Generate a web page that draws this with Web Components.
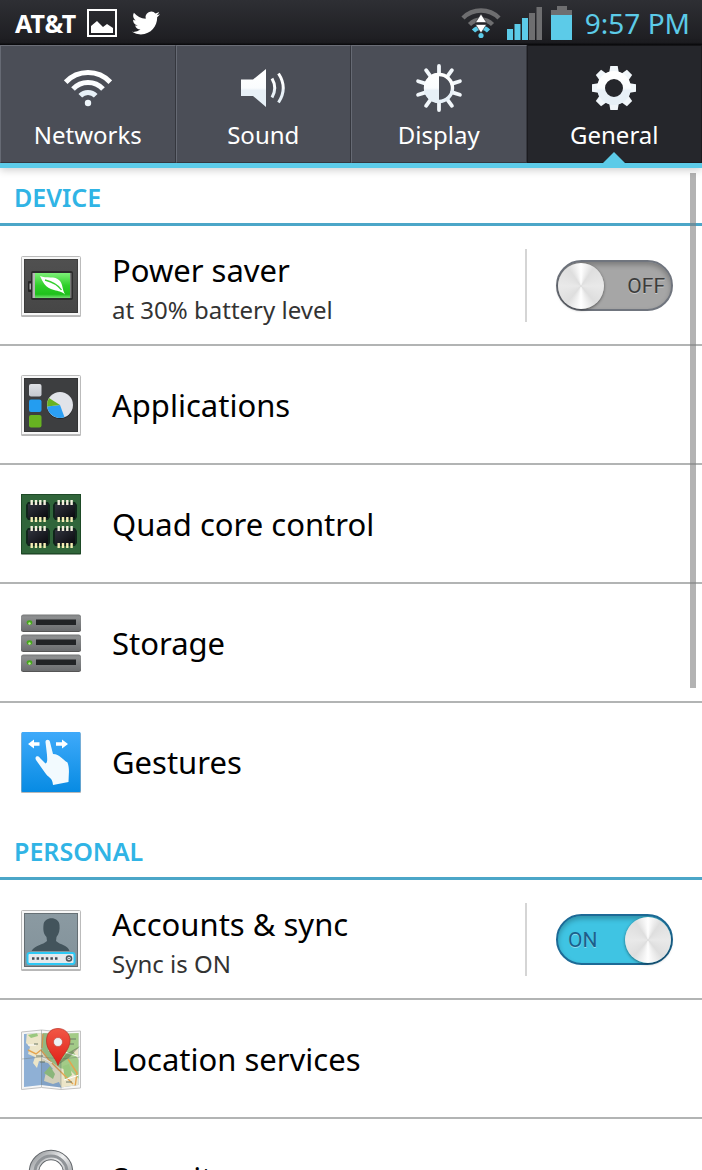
<!DOCTYPE html>
<html lang="en">
<head>
<meta charset="utf-8">
<meta name="viewport" content="width=device-width, initial-scale=1">
<title>Settings</title>
<style>
  html, body {
    margin: 0;
    height: 100%;
    overflow: hidden;
  }

  body {
    display: flex;
    flex-direction: column;
    background: #fff;
    color: #000;
    font-family: 'Noto Sans', 'Open Sans', sans-serif;
    --accent: #5ccbe8;
    --heading: #30b4e5;
  }
</style>
</head>
<body>

<status-bar carrier="AT&amp;T" time="9:57 PM"></status-bar>

<settings-tabs>
  <settings-tab icon="wifi">Networks</settings-tab>
  <settings-tab icon="sound">Sound</settings-tab>
  <settings-tab icon="display">Display</settings-tab>
  <settings-tab icon="gear" selected>General</settings-tab>
</settings-tabs>

<settings-list>
  <settings-section heading="DEVICE">
    <settings-row icon="power" label="Power saver" detail="at 30% battery level">
      <toggle-switch label="Power saver"></toggle-switch>
    </settings-row>
    <settings-row icon="apps" label="Applications"></settings-row>
    <settings-row icon="quad" label="Quad core control"></settings-row>
    <settings-row icon="storage" label="Storage"></settings-row>
    <settings-row icon="gestures" label="Gestures" last></settings-row>
  </settings-section>
  <settings-section heading="PERSONAL">
    <settings-row icon="accounts" label="Accounts &amp; sync" detail="Sync is ON">
      <toggle-switch label="Accounts and sync" on></toggle-switch>
    </settings-row>
    <settings-row icon="location" label="Location services"></settings-row>
    <settings-row icon="security" label="Security"></settings-row>
  </settings-section>
</settings-list>

<script>
// repeats one shape around the centre of an icon
const spin = (shape, count, cx, cy) =>
  Array.from({ length: count }, (_, i) =>
    `<g transform="rotate(${i * 360 / count} ${cx} ${cy})">${shape}</g>`).join('');

const shine = `
  <linearGradient id="shine" x1="0" y1="0" x2="0" y2="48" gradientUnits="userSpaceOnUse">
    <stop offset=".2" stop-color="#fff"/><stop offset=".5" stop-color="#fafcfe"/>
    <stop offset=".55" stop-color="#e8f0f7"/><stop offset="1" stop-color="#e6f0f7"/>
  </linearGradient>`;

// white card with a dark inner plate, shared by several row icons
const plate = (top, bottom) => `
  <linearGradient id="plate" x1="0" y1="0" x2="0" y2="1">
    <stop offset="0" stop-color="${top}"/><stop offset="1" stop-color="${bottom}"/>
  </linearGradient>
  <rect x="2" y="3" width="60" height="60" rx="1.5" fill="#999" opacity=".7"/>
  <rect x="2.5" y="2.5" width="59" height="59" rx="1" fill="#f7f7f7" stroke="#bbb"/>
  <rect x="5" y="5" width="54" height="54" fill="url(#plate)"/>
  <rect x="5.5" y="5.5" width="53" height="53" fill="none" stroke="#222" stroke-opacity=".35"/>`;

const chip = (x, y) => {
  let pins = '';
  for (let i = 0; i < 4; i++) {
    pins += `<rect x="${x + 3.5 + i * 4.3}" y="${y}" width="2.4" height="5" fill="#f2efdc"/>
      <rect x="${x + 3.5 + i * 4.3}" y="${y + 17}" width="2.4" height="5" fill="#f4edb4"/>`;
  }
  return `<path d="M${x + 1} ${y + 2}h20l2 3v12l-2 3h-20l-2-3v-12z" fill="#10251b"/>
    <rect x="${x + 1}" y="${y + 4}" width="20" height="14" fill="url(#chip)"/>${pins}`;
};

const drive = (y) => `
  <rect x="2" y="${y + 1}" width="60" height="16.5" rx="2.5" fill="#555"/>
  <rect x="2" y="${y}" width="60" height="16.5" rx="2.5" fill="url(#drive)"/>
  <rect x="17" y="${y + 5}" width="40" height="5.5" fill="#222426"/>
  <ellipse cx="10.5" cy="${y + 8}" rx="2.8" ry="2.3" fill="#45a51c"/>
  <circle cx="10.5" cy="${y + 9}" r="1.2" fill="#b4f28c"/>`;

const ICONS = {
  wifi: `${shine}
    <g fill="none" stroke="url(#shine)" stroke-width="5">
      <path d="M1.7 18.2A30.5 30.5 0 0 1 46.3 18.2"/>
      <path d="M9 25A20.5 20.5 0 0 1 39 25"/>
      <path d="M16.3 31.8A10.5 10.5 0 0 1 31.7 31.8"/>
    </g>
    <circle cx="24" cy="39" r="3.2" fill="#eef5fa"/>`,

  sound: `${shine}
    <path d="M2 15.5H14L27 5V43L14 32H2Z" fill="url(#shine)"/>
    <path d="M33 14.5Q38.5 24 33 33.5M39.5 9.5Q49 24 39.5 38.5" fill="none" stroke="url(#shine)" stroke-width="3"/>`,

  display: `${shine}
    ${spin('<path d="M24 10V2" stroke="#f2f7fb" stroke-width="3.8" stroke-linecap="round"/>', 10, 24, 24)}
    <circle cx="24" cy="24" r="13.5" fill="none" stroke="url(#shine)" stroke-width="3.4"/>
    <path d="M24 9A15 15 0 0 0 24 39Z" fill="url(#shine)"/>`,

  gear: `${shine}
    ${spin('<path d="M19 10L20.3 2H27.7L29 10Z" fill="#f1f6fa"/>', 8, 24, 24)}
    <circle cx="24" cy="24" r="13" fill="none" stroke="url(#shine)" stroke-width="8"/>`,

  power: `${plate('#505050', '#464646')}
    <linearGradient id="cell" x1="0" y1="0" x2="0" y2="1">
      <stop offset="0" stop-color="#7df078"/><stop offset=".5" stop-color="#2fd029"/>
      <stop offset=".85" stop-color="#1fc01c"/><stop offset="1" stop-color="#77dd73"/>
    </linearGradient>
    <rect x="9" y="27" width="5" height="11" rx="1" fill="#242424"/>
    <rect x="10.5" y="29.5" width="3" height="6" fill="#aaa"/>
    <rect x="12" y="17" width="42" height="29" rx="2" fill="#2b2b2b"/>
    <rect x="13.5" y="19" width="3" height="25" fill="#b5b5b5"/>
    <rect x="50.5" y="19" width="2" height="25" fill="#777"/>
    <rect x="16" y="19" width="35" height="25" fill="url(#cell)"/>
    <path d="M21 22C27 25 36 21 41 27C44 31 43 35 46 40.5C42 37 40 37.5 35 36C26 34 24 28 21 22Z" fill="#fff"/>
    <path d="M26 26C34 28 39 31 42.5 36" fill="none" stroke="#36cf30" stroke-width="1.3"/>`,

  apps: `${plate('#3d3e40', '#3d3e40')}
    <linearGradient id="pale" x1="0" y1="0" x2="0" y2="1">
      <stop offset="0" stop-color="#dfe1e5"/><stop offset="1" stop-color="#c5c9d0"/>
    </linearGradient>
    <rect x="10" y="11" width="12.5" height="12.5" rx="2" fill="url(#pale)"/>
    <rect x="10" y="26.5" width="12.5" height="12.5" rx="2" fill="#249df0"/>
    <rect x="10" y="42" width="12.5" height="12.5" rx="2" fill="#67b321"/>
    <circle cx="41" cy="33" r="13" fill="#27282a"/>
    <circle cx="41" cy="32" r="13" fill="#e1e3e9"/>
    <path d="M41 32L45.5 44.2A13 13 0 0 1 28.1 33.5Z" fill="#2b9ff5"/>
    <path d="M41 32L28.1 33.5A13 13 0 0 1 30 25Z" fill="#69b224"/>`,

  quad: `
    <linearGradient id="chip" x1="0" y1="0" x2="1" y2="1">
      <stop offset="0" stop-color="#31333e"/><stop offset="1" stop-color="#090a0e"/>
    </linearGradient>
    <rect x="2" y="3" width="60" height="60" rx="1" fill="#8b9b8d"/>
    <rect x="2.5" y="2.5" width="59" height="59" fill="#30653a" stroke="#1e4a27"/>
    ${chip(8, 8)}${chip(35, 8)}${chip(8, 34)}${chip(35, 34)}`,

  storage: `
    <linearGradient id="drive" x1="0" y1="0" x2="0" y2="1">
      <stop offset="0" stop-color="#77797a"/><stop offset=".15" stop-color="#8d8f90"/><stop offset="1" stop-color="#6b6d6f"/>
    </linearGradient>
    ${drive(3.5)}${drive(23.5)}${drive(43.5)}`,

  gestures: `
    <linearGradient id="sky" x1="0" y1="0" x2="0" y2="1">
      <stop offset="0" stop-color="#3faafa"/><stop offset="1" stop-color="#078be3"/>
    </linearGradient>
    <rect x="2" y="3" width="60" height="60" rx="1" fill="#888" opacity=".6"/>
    <rect x="2.5" y="2" width="59" height="60" rx="1" fill="url(#sky)"/>
    <path d="M9 14L15 9.5V12.2H20.5V15.8H15V18.500ZM49 14L43 9.5V12.2H37V15.8H43V18.5Z" fill="#fff"/>
    <path d="M26.5 12C26.5 9 30.5 9 31 12L34 24C41 24.5 43 29 48.5 32.5C51 39 49.5 46 49.5 52L34 55C33.500 47 29.500 48.500 25.5 42L17 30C15 26 19.5 25 21 28L26.500 33.500C29 33 28 27 28 25Z" fill="#f2fafe"/>`,

  accounts: `${plate('#8b9aa2', '#82929a')}
    <path d="M12.5 43C16 37 24 37 28 33L27.5 29C24.5 26 24 22 24.5 17C25 8 40 8 40.5 17C41 22 40 26 37.5 29L37 33C41 37 49 37 50.5 43Z" fill="#43545c"/>
    <rect x="8.5" y="45" width="47" height="11" rx="2" fill="#e4e9ed" stroke="#2dc8f5" stroke-width="2"/>
    <path d="M13 50.5H39.5" stroke="#444c55" stroke-width="2.6" stroke-dasharray="2.5 2.1"/>
    <circle cx="50" cy="50.5" r="2.5" fill="none" stroke="#4b535b" stroke-width="1.6"/>
    <circle cx="50" cy="50.5" r=".8" fill="#4b535b"/>`,

  location: `
    <clipPath id="sheet"><path d="M5 7L22.5 6L42 7L59.5 6V58L42 60.5L22.5 58L5 60Z"/></clipPath>
    <linearGradient id="pin" x1="0" y1="0" x2="0" y2="1">
      <stop offset="0" stop-color="#f15745"/><stop offset="1" stop-color="#e02018"/>
    </linearGradient>
    <path d="M2.5 5L22.5 3L42 5L61.5 4V61L42 62.5L22.5 60.5L2.5 62.5Z" fill="#f6f6f6" stroke="#c3c3c3"/>
    <g clip-path="url(#sheet)">
      <rect width="64" height="64" fill="#8fb0d5"/>
      <path d="M8 4H64V64H44L40 55L34 57L25 54L27 45L34 42L29 36L20 34L18 41L14 36L16 30L9 27L11 20L7 16Z" fill="#ece5c8"/>
      <path d="M24 4H64V19L54 24L63 38V55L52 44L41 41L30 33L23 23Z" fill="#a3cb88"/>
      <path d="M9 8L18 6L19 9L12 11ZM25 46L31 39L36 47L34 52ZM44 39L50 37L53 48L46 53Z" fill="#99c87f"/>
      <path d="M9 23L17 27L22 23L30 33L39 42L54 57M24 7L23 21M49 32L58 46L56 60" fill="none" stroke="#e4a450" stroke-width="1.4"/>
      <path d="M22 30L33 36M45 53L60 48M31 9L30 24M42 24L61 30M9 18H17" stroke="#fff" stroke-width="1"/>
      <path d="M15 17H19M17 29H24M21 35H26M51 12H57M51 17H55M47 55H53" stroke="#6d7966" stroke-width="1"/>
      <path d="M22.5 0H42V64H22.5Z" fill="#24415a" opacity=".13"/>
    </g>
    <path d="M3 32L22 30L42 32L61 30M22.5 3V60M42 5V62" fill="none" stroke="#68736e" stroke-width=".7" opacity=".55"/>
    <path d="M39 38L47 27L61 19L51 30Z" fill="#303b2b" opacity=".35"/>
    <path d="M39 38.5C36 29 27.5 24 27.5 14C27.5 6 32 1.5 39 1.5C46 1.5 51 6.5 51 13.5C51 23 42 29 39 38.5Z" fill="url(#pin)" stroke="#b9291f" stroke-width=".7"/>
    <circle cx="39" cy="15" r="4.5" fill="#edf2f5" stroke="#be3e33" stroke-width=".6"/>`,

  security: `
    <linearGradient id="steel" x1="0" y1="0" x2="1" y2="1">
      <stop offset="0" stop-color="#979a9d"/><stop offset=".45" stop-color="#f0f1f2"/><stop offset="1" stop-color="#8b8e91"/>
    </linearGradient>
    <path d="M15 40V26A17 17 0 0 1 49 26V40" fill="none" stroke="#63676b" stroke-width="10.5"/>
    <path d="M15 40V26A17 17 0 0 1 49 26V40" fill="none" stroke="url(#steel)" stroke-width="8.5"/>
    <path d="M16 40V26A16 16 0 0 1 48 26V40" fill="none" stroke="#909498" stroke-width="3"/>
    <rect x="6" y="32" width="52" height="30" rx="3" fill="#a6aaad"/>`,
};

/**
 * <settings-icon name="..." size="...">
 * Square SVG drawn from the ICONS table.
 */
class SettingsIcon extends HTMLElement {
  connectedCallback() {
    const size = this.getAttribute('size') ?? 64;
    this.attachShadow({ mode: 'open' }).innerHTML = `
      <style>
        :host { display: block; flex: none; }
        svg { display: block; }
      </style>
      <svg width="${size}" height="${size}" viewBox="0 0 ${size} ${size}" aria-hidden="true">
        ${ICONS[this.getAttribute('name')] ?? ''}
      </svg>
    `;
  }
}

/**
 * <status-bar carrier time>
 * Notifications on the left, signal, battery and clock on the right.
 */
class StatusBar extends HTMLElement {
  connectedCallback() {
    this.attachShadow({ mode: 'open' }).innerHTML = `
      <style>
        :host {
          display: flex;
          flex: none;
          align-items: center;
          box-sizing: border-box;
          height: 45px;
          padding: 0 12px 0 15px;
          background: linear-gradient(#2e2f34, #1d1d21 94%, #08080a);
          color: #fff;
        }
        svg { display: block; flex: none; }
        .carrier { font-size: 25px; font-weight: 700; line-height: 32px; }
        .notes { display: flex; align-items: center; gap: 15px; margin-left: 11px; }
        .system { display: flex; align-items: center; gap: 6px; margin-left: auto; }
        .levels { display: flex; align-items: center; gap: 8px; }
        time { margin-left: 6px; color: var(--accent); font-size: 28px; line-height: 36px; }
      </style>
      <span class="carrier"></span>
      <div class="notes">
        <svg width="30" height="28" viewBox="0 0 30 28" role="img" aria-label="Picture saved">
          <rect x="1" y="1" width="28" height="26" fill="none" stroke="#fff" stroke-width="2"/>
          <path d="M4 24V17L10 12L16 18L20 15L26 19V24Z" fill="#fff"/>
        </svg>
        <svg width="28" height="28" viewBox="0 0 24 24" role="img" aria-label="Twitter">
          <path fill="#fff" d="M23.953 4.57a10 10 0 01-2.825.775 4.958 4.958 0 002.163-2.723c-.951.555-2.005.959-3.127 1.184a4.92 4.92 0 00-8.384 4.482C7.69 8.095 4.067 6.13 1.64 3.162a4.822 4.822 0 00-.666 2.475c0 1.71.87 3.213 2.188 4.096a4.904 4.904 0 01-2.228-.616v.06a4.923 4.923 0 003.946 4.827 4.996 4.996 0 01-2.212.085 4.936 4.936 0 004.604 3.417 9.867 9.867 0 01-6.102 2.105c-.39 0-.779-.023-1.17-.067a13.995 13.995 0 007.557 2.209c9.053 0 13.998-7.496 13.998-13.985 0-.21 0-.42-.015-.63A9.935 9.935 0 0024 4.59z"/>
        </svg>
      </div>
      <div class="system">
        <svg width="40" height="34" viewBox="0 0 40 34" role="img" aria-label="Wi-Fi">
          <g fill="none" stroke-width="4.5">
            <path d="M2 12A25.5 25.5 0 0 1 38 12" stroke="#6e6e70"/>
            <path d="M8.5 18.5A16.5 16.5 0 0 1 31.5 18.5" stroke="#6e6e70"/>
            <path d="M12.5 25A10.5 10.5 0 0 1 27.5 25" stroke="#5ccbe8"/>
          </g>
          <path d="M20 8L25.5 16.5H14.5ZM20 27L25.5 18.5H14.5Z" fill="#fff" stroke="#252529" stroke-width=".6"/>
          <circle cx="20" cy="29.5" r="2.6" fill="#5ccbe8"/>
        </svg>
        <div class="levels">
          <svg width="36" height="34" viewBox="0 0 36 34" role="img" aria-label="Signal">
            <path d="M0 23h6v11h-6zM7.5 18h6v16h-6zM15 12h6v22h-6z" fill="#5ccbe8"/>
            <path d="M22 7h6v27h-6zM29.5 1h5.5v33h-5.5z" fill="#6e6e70"/>
          </svg>
          <svg width="22" height="34" viewBox="0 0 22 34" role="img" aria-label="Battery">
            <path d="M6 0H16V4H21V10H0V4H6Z" fill="#6e6e70"/>
            <path d="M0 9H21V34H0Z" fill="#5ccbe8"/>
          </svg>
        </div>
        <time></time>
      </div>
    `;
    this.shadowRoot.querySelector('.carrier').textContent = this.getAttribute('carrier');
    this.shadowRoot.querySelector('time').textContent = this.getAttribute('time');
  }
}

/** <settings-tabs>: equal columns over the accent line. */
class SettingsTabs extends HTMLElement {
  connectedCallback() {
    this.attachShadow({ mode: 'open' }).innerHTML = `
      <style>
        :host {
          display: block;
          flex: none;
          position: relative;
          z-index: 1;
          border-bottom: 5px solid var(--accent);
          box-shadow: 0 2px 8px rgba(0, 0, 0, .2);
        }
        nav {
          display: grid;
          grid-auto-flow: column;
          grid-auto-columns: 1fr;
          background: #4b4e57;
        }
      </style>
      <nav aria-label="Settings"><slot></slot></nav>
    `;
  }
}

/** <settings-tab icon selected>: label goes in the slot. */
class SettingsTab extends HTMLElement {
  connectedCallback() {
    this.attachShadow({ mode: 'open' }).innerHTML = `
      <style>
        :host { display: block; position: relative; }
        button {
          display: flex;
          flex-direction: column;
          align-items: center;
          gap: 7px;
          box-sizing: border-box;
          width: 100%;
          height: 118px;
          margin: 0;
          padding: 18px 0 0;
          border: 1px solid;
          border-color: #6a6d76 #35373e #35373e #666a74;
          background: #4b4e57;
          color: #fff;
          font: inherit;
          font-size: 24px;
          line-height: 32px;
        }
        :host([selected]) button {
          border-color: #141417 #1b1b1f #1b1b1f #1b1b1f;
          background: #25262b;
        }
        :host([selected])::after {
          content: '';
          position: absolute;
          bottom: 0;
          left: 50%;
          margin-left: -11px;
          border: 11px solid transparent;
          border-top: 0;
          border-bottom-color: var(--accent);
        }
      </style>
      <button type="button" aria-pressed="${this.hasAttribute('selected')}">
        <settings-icon name="${this.getAttribute('icon')}" size="48"></settings-icon>
        <span><slot></slot></span>
      </button>
    `;
  }
}

class SettingsList extends HTMLElement {
  connectedCallback() {
    this.attachShadow({ mode: 'open' }).innerHTML = `
      <style>
        :host {
          display: block;
          flex: 1;
          min-height: 0;
          position: relative;
          overflow: hidden;
        }
        .thumb {
          position: absolute;
          top: 5px;
          right: 6px;
          width: 6px;
          height: 44vh;
          background: rgba(128, 128, 128, .6);
        }
      </style>
      <slot></slot>
      <div class="thumb"></div>
    `;
  }
}

class SettingsSection extends HTMLElement {
  connectedCallback() {
    this.attachShadow({ mode: 'open' }).innerHTML = `
      <style>
        :host { display: block; }
        h2 {
          box-sizing: border-box;
          height: 58px;
          margin: 0 0 1px;
          padding: 9px 14px 0;
          border-bottom: 3px solid #4ba6c8;
          color: var(--heading);
          font-size: 25px;
          font-weight: 600;
          line-height: 40px;
        }
      </style>
      <h2></h2>
      <slot></slot>
    `;
    this.shadowRoot.querySelector('h2').textContent = this.getAttribute('heading');
  }
}

/**
 * <settings-row icon label detail last>
 * A control passed in the slot sits right of a divider.
 */
class SettingsRow extends HTMLElement {
  connectedCallback() {
    this.attachShadow({ mode: 'open' }).innerHTML = `
      <style>
        :host {
          display: flex;
          align-items: center;
          gap: 29px;
          box-sizing: border-box;
          height: 119px;
          padding: 0 29px 0 19px;
          border-bottom: 2px solid #b2b4b4;
        }
        :host([last]) { border-color: transparent; }
        .copy { flex: 1; min-width: 0; white-space: nowrap; }
        .label { font-size: 31px; line-height: 44px; }
        .detail { color: #333; font-size: 24px; line-height: 36px; }
        :host([detail]) .copy { padding-top: 4px; }
        .control {
          display: flex;
          align-items: center;
          height: 73px;
          padding-left: 29px;
          border-left: 2px solid #d5d5d5;
        }
      </style>
      <settings-icon name="${this.getAttribute('icon')}"></settings-icon>
      <div class="copy">
        <div class="label"></div>
        ${this.hasAttribute('detail') ? '<div class="detail"></div>' : ''}
      </div>
      ${this.children.length ? '<div class="control"><slot></slot></div>' : ''}
    `;
    this.shadowRoot.querySelector('.label').textContent = this.getAttribute('label');
    const detail = this.shadowRoot.querySelector('.detail');
    if (detail) detail.textContent = this.getAttribute('detail');
  }
}

/** <toggle-switch label on>: the checkbox itself is the knob. */
class ToggleSwitch extends HTMLElement {
  connectedCallback() {
    this.attachShadow({ mode: 'open' }).innerHTML = `
      <style>
        :host { display: block; }
        label {
          display: flex;
          align-items: center;
          justify-content: space-between;
          box-sizing: border-box;
          width: 117px;
          height: 51px;
          padding: 0 6px 0 0;
          border: 2px solid #70757e;
          border-radius: 26px;
          background: #a6a6a6;
          box-shadow: inset 0 3px 5px rgba(0, 0, 0, .25);
          color: #3c3c3c;
          font-family: Roboto, sans-serif;
          font-size: 21px;
          line-height: 24px;
          text-shadow: 0 1px 0 rgba(255, 255, 255, .4);
        }
        input {
          appearance: none;
          width: 46px;
          height: 46px;
          margin: 0;
          border-radius: 50%;
          background: conic-gradient(#fff, #dedede 35deg, #e9e9e9 90deg, #dedede 140deg,
            #fff 180deg, #dedede 220deg, #e9e9e9 270deg, #dedede 325deg, #fff);
          box-shadow: 0 1px 3px rgba(0, 0, 0, .5);
        }
        label:has(:checked) {
          flex-direction: row-reverse;
          padding: 0 0 0 10px;
          border-color: #1d6a96;
          background: #3fc4e3;
          color: #1b5f8b;
        }
      </style>
      <label>
        <input type="checkbox" role="switch" aria-label="${this.getAttribute('label')}" ${this.hasAttribute('on') ? 'checked' : ''}>
        <span></span>
      </label>
    `;
    const input = this.shadowRoot.querySelector('input');
    const text = this.shadowRoot.querySelector('span');
    const update = () => { text.textContent = input.checked ? 'ON' : 'OFF'; };
    input.addEventListener('change', update);
    update();
  }
}

customElements.define('settings-icon', SettingsIcon);
customElements.define('status-bar', StatusBar);
customElements.define('settings-tabs', SettingsTabs);
customElements.define('settings-tab', SettingsTab);
customElements.define('settings-list', SettingsList);
customElements.define('settings-section', SettingsSection);
customElements.define('settings-row', SettingsRow);
customElements.define('toggle-switch', ToggleSwitch);
</script>
</body>
</html>
